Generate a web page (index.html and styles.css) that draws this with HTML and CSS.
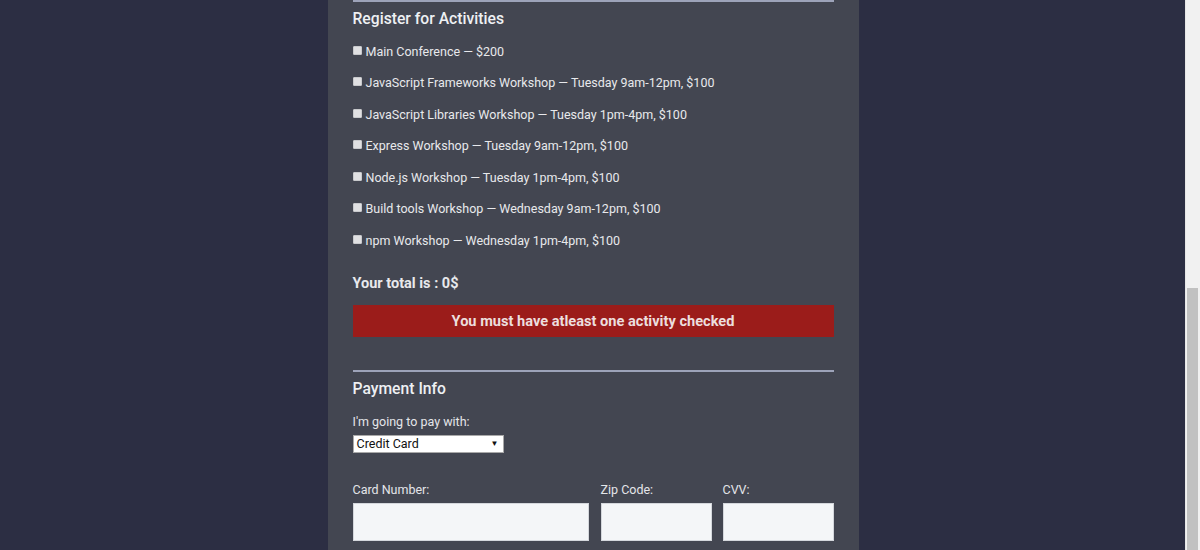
FILE: index.html
```html
<!DOCTYPE html>
<html>
<head>
<meta charset="utf-8">
<link rel="stylesheet" href="styles.css">
</head>
<body>
<div class="viewport">
  <main class="page">
    <form class="panel">
      <div class="rule"></div>
      <h2 class="legend legend-activities">Register for Activities</h2>
      <div class="activities">
        <label class="activity"><input type="checkbox" class="check"><span>Main Conference — $200</span></label>
        <label class="activity"><input type="checkbox" class="check"><span>JavaScript Frameworks Workshop — Tuesday 9am-12pm, $100</span></label>
        <label class="activity"><input type="checkbox" class="check"><span>JavaScript Libraries Workshop — Tuesday 1pm-4pm, $100</span></label>
        <label class="activity"><input type="checkbox" class="check"><span>Express Workshop — Tuesday 9am-12pm, $100</span></label>
        <label class="activity"><input type="checkbox" class="check"><span>Node.js Workshop — Tuesday 1pm-4pm, $100</span></label>
        <label class="activity"><input type="checkbox" class="check"><span>Build tools Workshop — Wednesday 9am-12pm, $100</span></label>
        <label class="activity"><input type="checkbox" class="check"><span>npm Workshop — Wednesday 1pm-4pm, $100</span></label>
      </div>
      <p class="total">Your total is : 0$</p>
      <div class="error">You must have atleast one activity checked</div>

      <div class="rule rule-payment"></div>
      <h2 class="legend legend-payment">Payment Info</h2>
      <label class="field-label pay-label">I'm going to pay with:</label>
      <div class="select">
        <span>Credit Card</span>
        <span class="caret">▼</span>
      </div>
      <div class="card-row">
        <div class="card-field card-number">
          <label class="field-label">Card Number:</label>
          <div class="input"></div>
        </div>
        <div class="card-field card-zip">
          <label class="field-label">Zip Code:</label>
          <div class="input"></div>
        </div>
        <div class="card-field card-cvv">
          <label class="field-label">CVV:</label>
          <div class="input"></div>
        </div>
      </div>
    </form>
  </main>
  <div class="scrollbar">
    <div class="thumb"></div>
  </div>
</div>
</body>
</html>
```

FILE: styles.css
```css
* { box-sizing: border-box; }

html, body {
  margin: 0;
  padding: 0;
  height: 100%;
  overflow: hidden;
}

body {
  font-family: Roboto, "Liberation Sans", sans-serif;
  color: #e8e9ec;
}

.viewport {
  display: flex;
  height: 550px;
  width: 1200px;
}

.page {
  flex: 1;
  background: #2c2e43;
  display: flex;
  justify-content: center;
  overflow: hidden;
}

.panel {
  width: 531px;
  background: #434651;
  padding: 0 25px;
  margin-left: 1px;
}

.rule {
  height: 2px;
  background: #9da3b9;
}

.legend {
  margin: 0;
  font-size: 15.7px;
  font-weight: 500;
  line-height: 20px;
  color: #eef0f3;
}

.legend-activities { margin-top: 7px; }

.activities {
  margin-top: 7px;
  display: flex;
  flex-direction: column;
}

.activity {
  height: 31.5px;
  display: flex;
  align-items: center;
  font-size: 12.5px;
  line-height: 16px;
}

.check {
  appearance: none;
  -webkit-appearance: none;
  width: 9px;
  height: 9px;
  margin: 0 4px 3px 0;
  background: #e0e0e2;
  border: 1px solid #c8c9cc;
  border-radius: 1px;
  flex: none;
}

.total {
  margin: 18px 0 0;
  font-size: 14.5px;
  font-weight: 700;
  line-height: 18px;
}

.error {
  margin-top: 12px;
  height: 32px;
  background: #9b1c1a;
  color: #ecdede;
  font-size: 14.6px;
  font-weight: 700;
  display: flex;
  align-items: center;
  justify-content: center;
}

.rule-payment { margin-top: 33px; }

.legend-payment { margin-top: 7px; }

.field-label {
  display: block;
  font-size: 12.5px;
  line-height: 16px;
  color: #e3e5e9;
}

.pay-label { margin-top: 15px; }

.select {
  margin-top: 5px;
  width: 151px;
  height: 18px;
  background: #ffffff;
  border: 1px solid #a9a9a9;
  color: #111;
  font-size: 12.5px;
  display: flex;
  align-items: center;
  justify-content: space-between;
  padding: 0 4px 0 3px;
}

.caret {
  font-size: 8px;
}

.card-row {
  margin-top: 29px;
  display: flex;
}

.card-number { width: 236px; margin-right: 12px; }
.card-zip { width: 111px; margin-right: 11px; }
.card-cvv { width: 111px; }

.card-field .input {
  margin-top: 5px;
}

.input {
  height: 38px;
  background: #f4f6f8;
  border: 1px solid #d4d7dc;
}

.scrollbar {
  width: 15px;
  background: #f1f1f1;
  border-left: 1px solid #e6e6e6;
  padding-top: 288px;
  padding-left: 1px;
}

.thumb {
  width: 11px;
  height: 262px;
  background: #c1c1c1;
}
```
